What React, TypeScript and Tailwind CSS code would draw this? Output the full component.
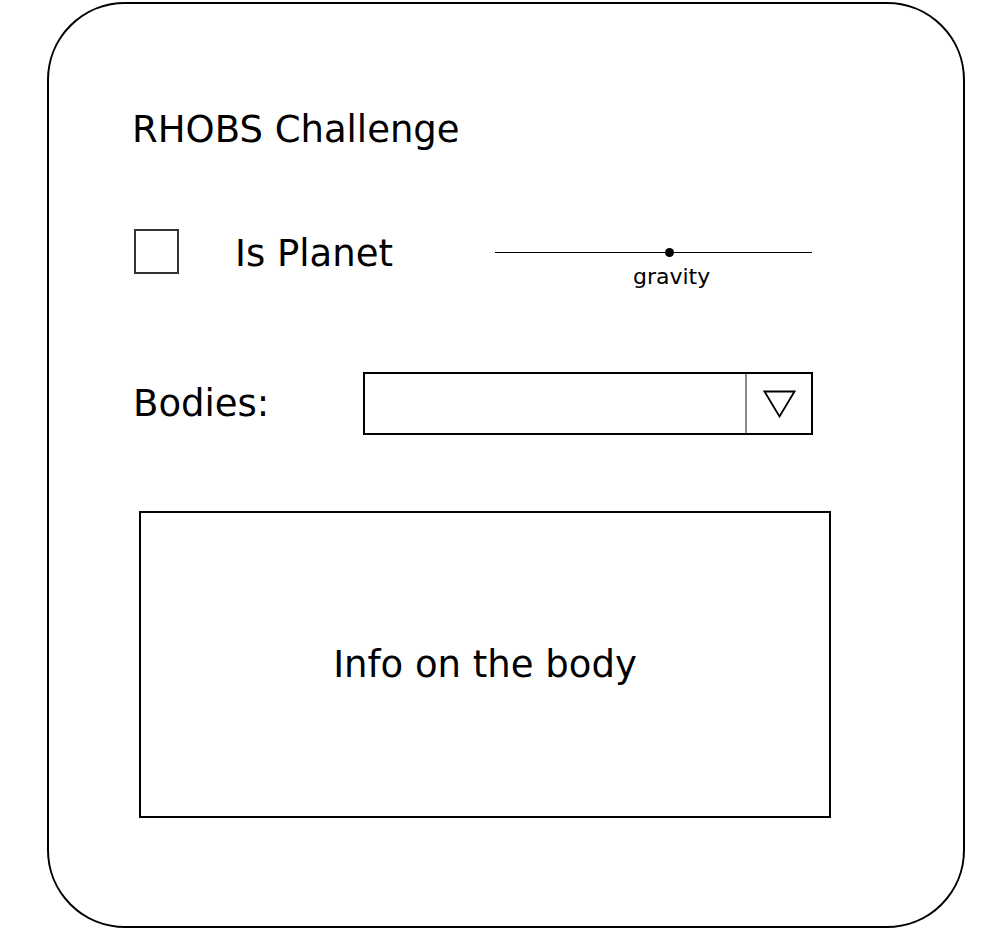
import React from 'react';

/* =======================
   WIREFRAME: RHOBS CHALLENGE
======================= */
const font = "font-['DejaVu_Sans',sans-serif]";

const App: React.FC = () => {
  return (
    <div className={`w-[991px] h-[938px] bg-white text-black ${font}`}>
      <div className="ml-[47px] mt-[2px] w-[918px] h-[926px] border-2 border-black rounded-[78px] pl-[83px] flex flex-col">

        {/* TITLE */}
        <h1 className="mt-[107px] text-[37px] leading-[37px] font-normal">
          RHOBS Challenge
        </h1>

        {/* CHECKBOX + SLIDER */}
        <div className="mt-[81px] flex items-start">
          <div className="ml-[2px] w-[45px] h-[45px] border-2 border-[#333]" />
          <span className="ml-[56px] mt-[6px] w-[260px] text-[37px] leading-[37px]">
            Is Planet
          </span>
          <Slider />
        </div>

        {/* BODIES SELECT */}
        <div className="mt-[84px] flex items-center h-[63px]">
          <span className="ml-[1px] w-[230px] text-[37px] leading-[37px]">Bodies:</span>
          <div className="w-[450px] h-[63px] border-2 border-black flex">
            <div className="flex-1" />
            <div className="w-[66px] h-full border-l-2 border-[#8a8a8a] flex items-center justify-center">
              <svg width="33" height="28" viewBox="0 0 33 28" fill="none">
                <path d="M1.5 1.5 H31.5 L16.5 26.5 Z" stroke="#000" strokeWidth="1.8" strokeLinejoin="miter" />
              </svg>
            </div>
          </div>
        </div>

        {/* INFO BOX */}
        <div className="mt-[76px] ml-[7px] w-[692px] h-[307px] border-2 border-black flex items-center justify-center">
          <span className="text-[37px] leading-[37px]">Info on the body</span>
        </div>
      </div>
    </div>
  );
};

export default App;

/* =======================
   SLIDER
======================= */
const Slider: React.FC = () => {
  return (
    <div className="mt-[23px] w-[317px] flex flex-col">
      <div className="relative h-px bg-black">
        <div className="absolute left-[170px] top-[-4px] w-[9px] h-[9px] rounded-full bg-black" />
      </div>
      <span className="mt-[13px] pl-[138px] text-[22px] leading-[22px]">gravity</span>
    </div>
  );
};
